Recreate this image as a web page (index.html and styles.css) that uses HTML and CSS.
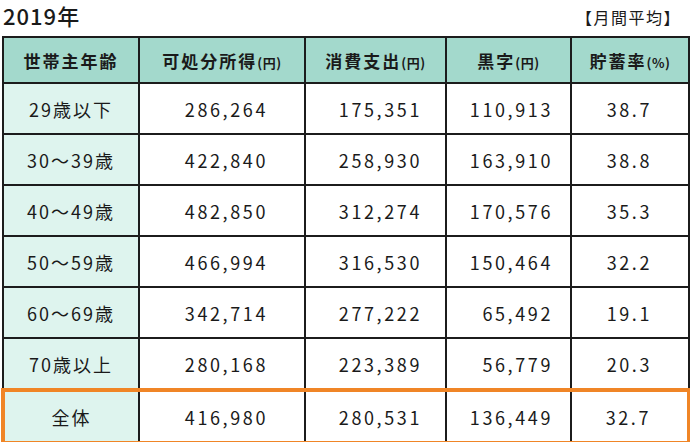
FILE: index.html
```html
<!DOCTYPE html>
<html lang="ja">
<head>
<meta charset="utf-8">
<link rel="stylesheet" href="styles.css">
</head>
<body>
<div class="page">
  <div class="top">
    <div class="title">2019年</div>
    <div class="note">【月間平均】</div>
  </div>
  <table class="tbl">
    <colgroup>
      <col class="c1"><col class="c2"><col class="c3"><col class="c4"><col class="c5">
    </colgroup>
    <thead>
      <tr>
        <th>世帯主年齢</th>
        <th>可処分所得<span class="u">(円)</span></th>
        <th>消費支出<span class="u">(円)</span></th>
        <th>黒字<span class="u">(円)</span></th>
        <th>貯蓄率<span class="u">(%)</span></th>
      </tr>
    </thead>
    <tbody>
      <tr><td class="lab">29歳以下</td><td class="n2">286,264</td><td class="n3">175,351</td><td class="n4">110,913</td><td class="n5">38.7</td></tr>
      <tr><td class="lab">30～39歳</td><td class="n2">422,840</td><td class="n3">258,930</td><td class="n4">163,910</td><td class="n5">38.8</td></tr>
      <tr><td class="lab">40～49歳</td><td class="n2">482,850</td><td class="n3">312,274</td><td class="n4">170,576</td><td class="n5">35.3</td></tr>
      <tr><td class="lab">50～59歳</td><td class="n2">466,994</td><td class="n3">316,530</td><td class="n4">150,464</td><td class="n5">32.2</td></tr>
      <tr><td class="lab">60～69歳</td><td class="n2">342,714</td><td class="n3">277,222</td><td class="n4">65,492</td><td class="n5">19.1</td></tr>
      <tr><td class="lab">70歳以上</td><td class="n2">280,168</td><td class="n3">223,389</td><td class="n4">56,779</td><td class="n5">20.3</td></tr>
      <tr class="total"><td class="lab">全体</td><td class="n2">416,980</td><td class="n3">280,531</td><td class="n4">136,449</td><td class="n5">32.7</td></tr>
    </tbody>
  </table>
</div>
</body>
</html>
```
FILE: styles.css
```css
html, body {
  margin: 0;
  padding: 0;
  background: #ffffff;
}
body {
  font-family: "Noto Sans CJK JP", "Noto Sans", sans-serif;
  color: #1a1a1a;
  width: 690px;
  height: 442px;
  overflow: hidden;
}
.page {
  width: 690px;
}
.top {
  display: flex;
  justify-content: space-between;
  align-items: flex-start;
  height: 36px;
  box-sizing: border-box;
  padding: 2px 9px 0 3px;
}
.title {
  font-size: 22px;
  line-height: 26px;
  font-weight: 500;
  letter-spacing: 1px;
}
.note {
  font-size: 16px;
  line-height: 20px;
  font-weight: 400;
  letter-spacing: 1.5px;
  margin-top: 5px;
}
.tbl {
  border-collapse: collapse;
  table-layout: fixed;
  width: 686px;
  margin-left: 1px;
}
.c1 { width: 136px; }
.c2 { width: 166px; }
.c3 { width: 141px; }
.c4 { width: 125px; }
.c5 { width: 118px; }
.tbl th, .tbl td {
  border: 2px solid #1c1c1c;
  padding: 0;
  white-space: nowrap;
}
.tbl th {
  background: #a3d9cc;
  height: 44px;
  font-size: 17px;
  font-weight: 700;
  letter-spacing: 2px;
  text-align: center;
}
.tbl th .u {
  font-size: 13px;
  letter-spacing: 0.5px;
}
.tbl td {
  height: 49px;
  font-size: 18px;
  letter-spacing: 2.6px;
  background: #ffffff;
}
.tbl td.lab {
  background: #def4ee;
  text-align: center;
  letter-spacing: 2px;
}
.n2 { text-align: right; padding-right: 36px !important; }
.n3 { text-align: right; padding-right: 23px !important; }
.n4 { text-align: right; padding-right: 17px !important; }
.n5 { text-align: right; padding-right: 36px !important; }
.tbl tr.total td {
  border-top: 4px solid #f08526;
  border-bottom: 4px solid #f08526;
}
.tbl tr.total td:first-child {
  border-left: 4px solid #f08526;
}
.tbl tr.total td:last-child {
  border-right: 4px solid #f08526;
}
```
